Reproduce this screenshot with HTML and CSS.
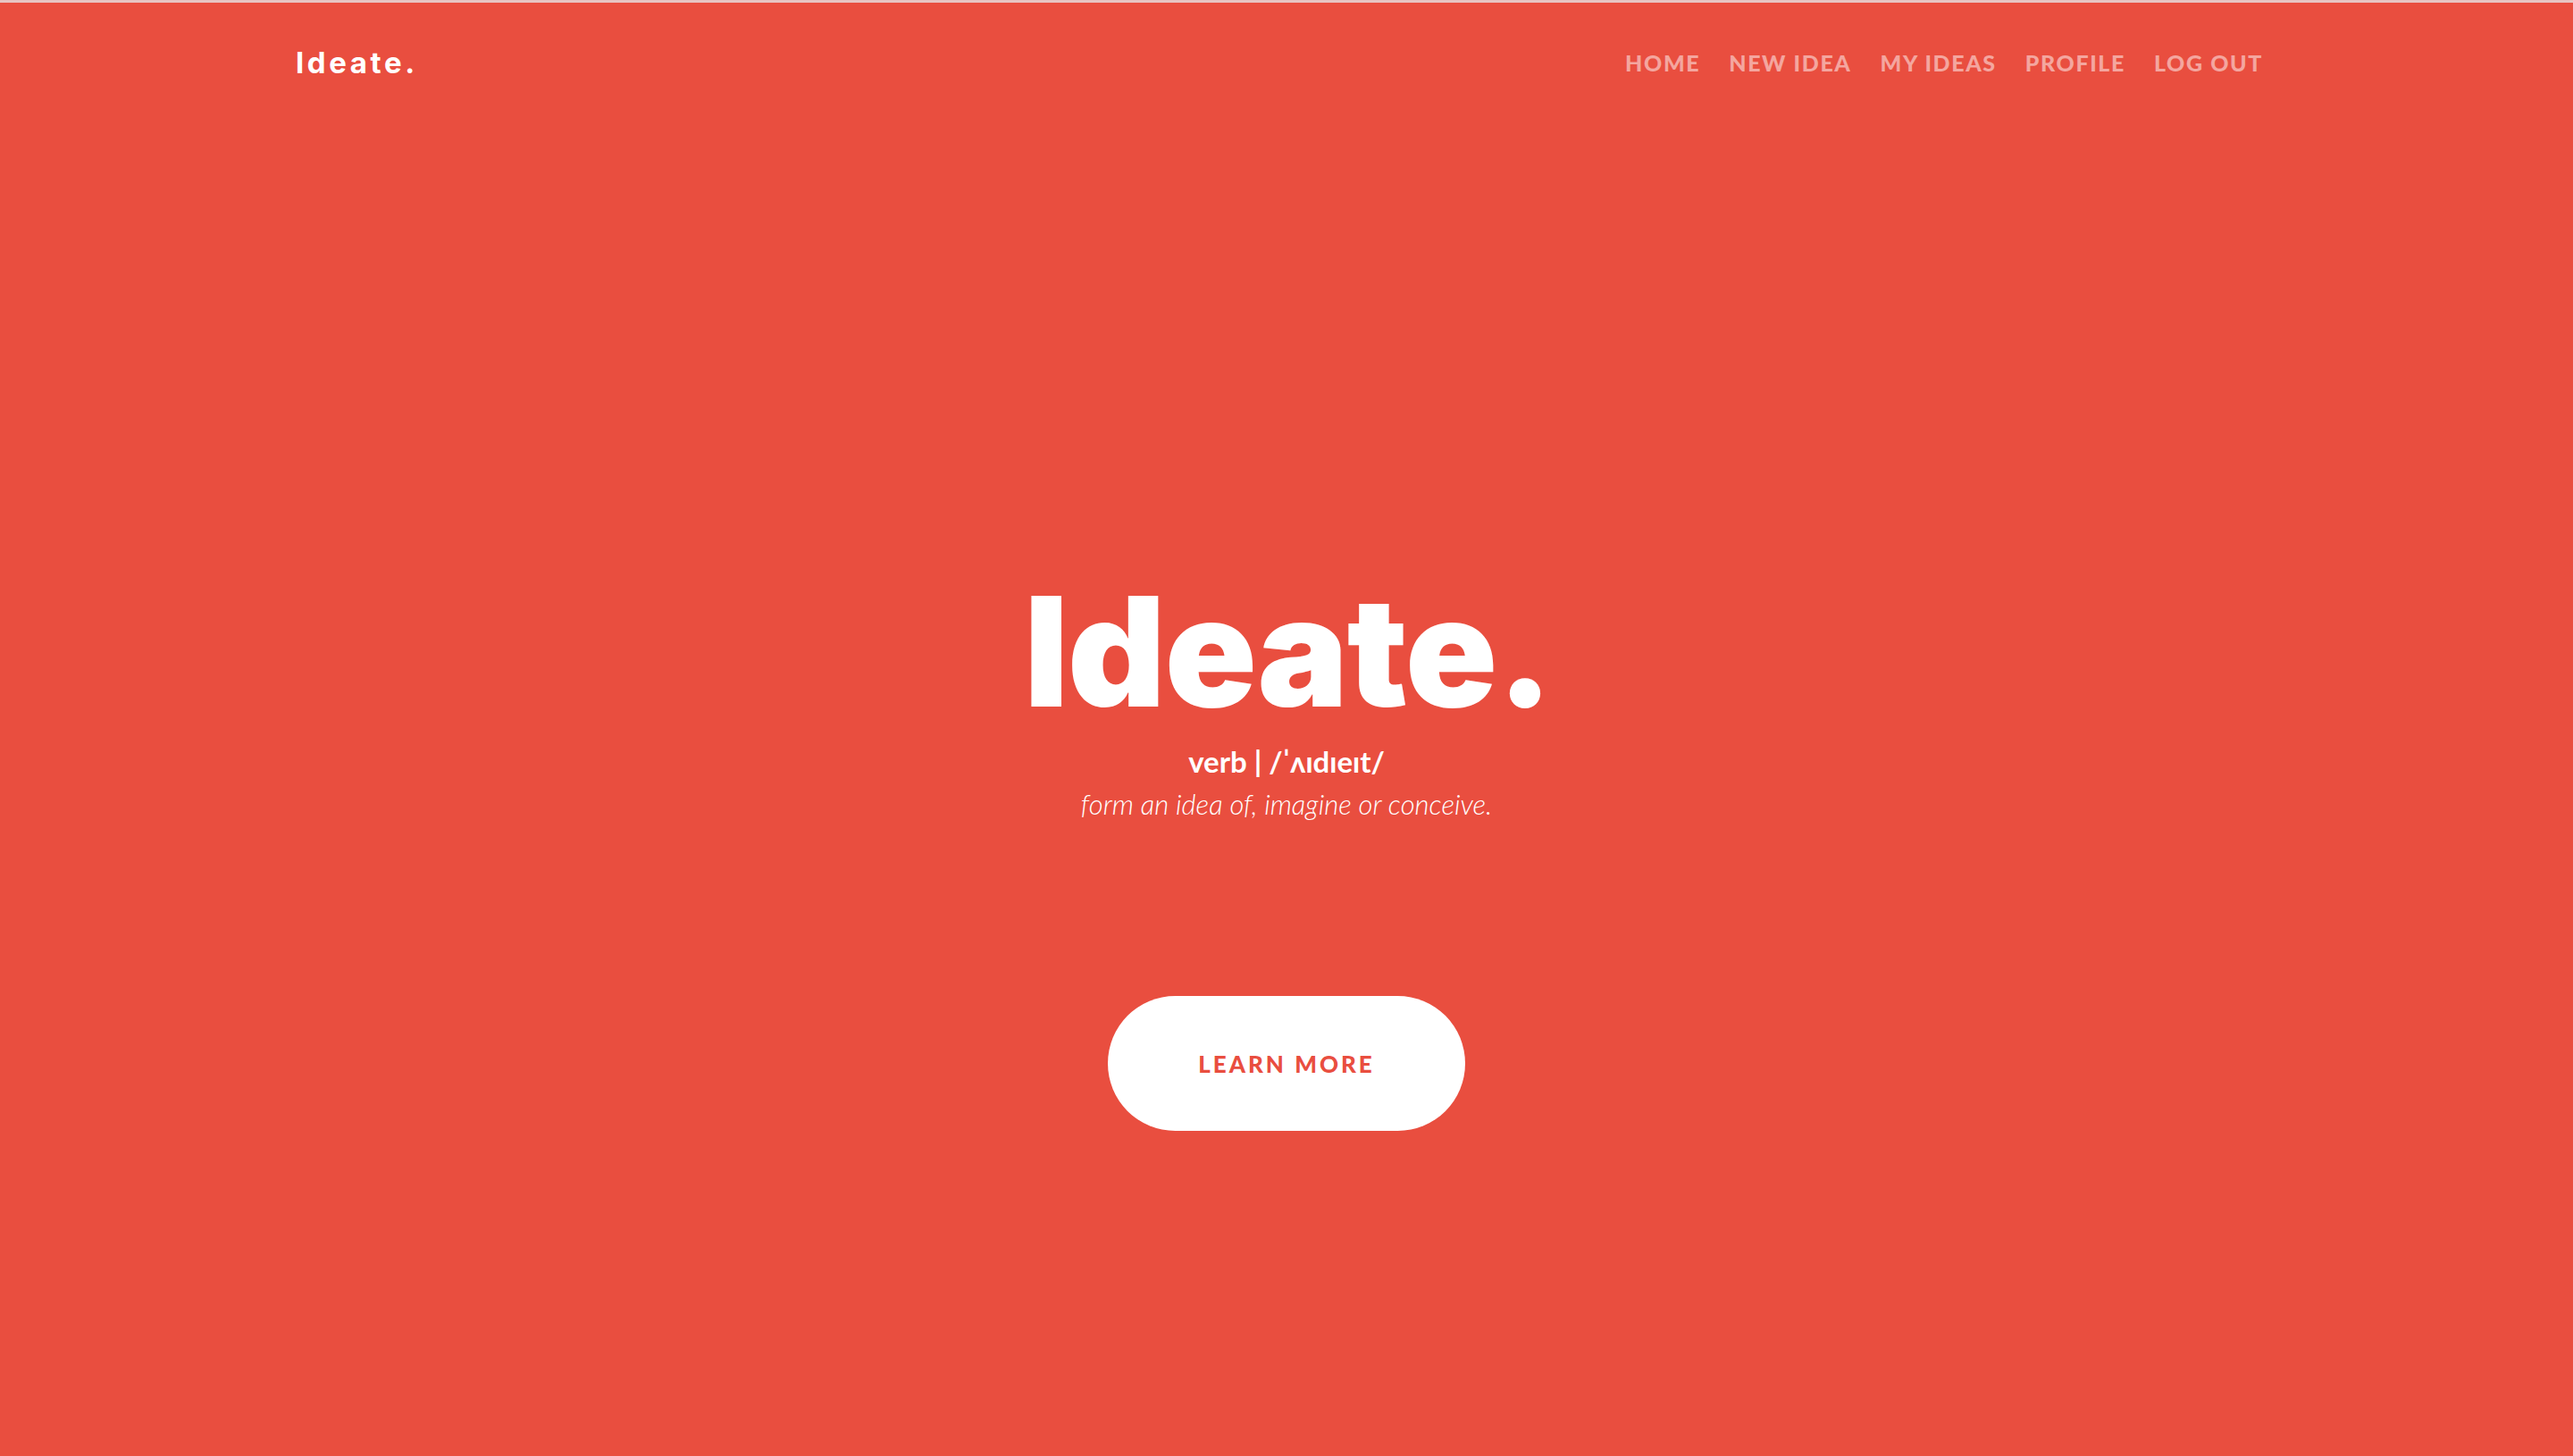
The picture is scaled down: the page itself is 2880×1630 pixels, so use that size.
FILE: index.html
```html
<!DOCTYPE html>
<html lang="en">
<head>
<meta charset="utf-8">
<title>Ideate.</title>
<link rel="stylesheet" href="styles.css">
</head>
<body>
<div class="topline"></div>
<header class="header">
  <a class="brand" href="#">Ideate.</a>
  <nav class="links">
    <a class="link" href="#">Home</a>
    <a class="link" href="#">New Idea</a>
    <a class="link" href="#">My Ideas</a>
    <a class="link" href="#">Profile</a>
    <a class="link" href="#">Log Out</a>
  </nav>
</header>
<main class="hero">
  <h1 class="title">Ideate.</h1>
  <p class="pron">verb | /ˈʌɪdɪeɪt/</p>
  <p class="def">form an idea of, imagine or conceive.</p>
  <a class="btn" href="#">Learn More</a>
</main>
</body>
</html>
```

FILE: styles.css
```css
html, body {
  margin: 0;
  padding: 0;
}
body {
  background: #e94e3f;
  min-height: 1630px;
  font-family: "Lato", "Open Sans", sans-serif;
  color: #fff;
}
a {
  text-decoration: none;
}
.topline {
  height: 3px;
  background: #e7c5c3;
}
.header {
  width: 2218px;
  margin: 0 auto;
  height: 134px;
  display: flex;
  align-items: center;
  justify-content: space-between;
}
.brand {
  font-family: "Inter", sans-serif;
  font-weight: 700;
  font-size: 33px;
  letter-spacing: 3.6px;
  color: #fff;
}
.links {
  display: flex;
  align-items: center;
}
.link {
  font-family: "Lato", sans-serif;
  font-weight: 900;
  font-size: 25px;
  letter-spacing: 1.6px;
  text-transform: uppercase;
  color: rgba(255, 255, 255, 0.5);
  padding: 0 16px;
}
.hero {
  display: flex;
  flex-direction: column;
  align-items: center;
  padding-top: 507px;
}
.title {
  margin: 0 0 0 4px;
  font-family: "Inter", sans-serif;
  font-weight: 900;
  font-size: 170px;
  line-height: 170px;
  letter-spacing: -1px;
}
.pron {
  margin: 18px 0 0;
  font-weight: 700;
  font-size: 33px;
  line-height: 40px;
}
.def {
  margin: 8px 0 0;
  font-style: italic;
  font-weight: 300;
  font-size: 31px;
  line-height: 40px;
}
.btn {
  margin-top: 195px;
  width: 400px;
  height: 151px;
  border-radius: 76px;
  background: #fff;
  color: #e94e3f;
  display: flex;
  align-items: center;
  justify-content: center;
  font-weight: 900;
  font-size: 26px;
  letter-spacing: 3px;
  text-transform: uppercase;
}
```
